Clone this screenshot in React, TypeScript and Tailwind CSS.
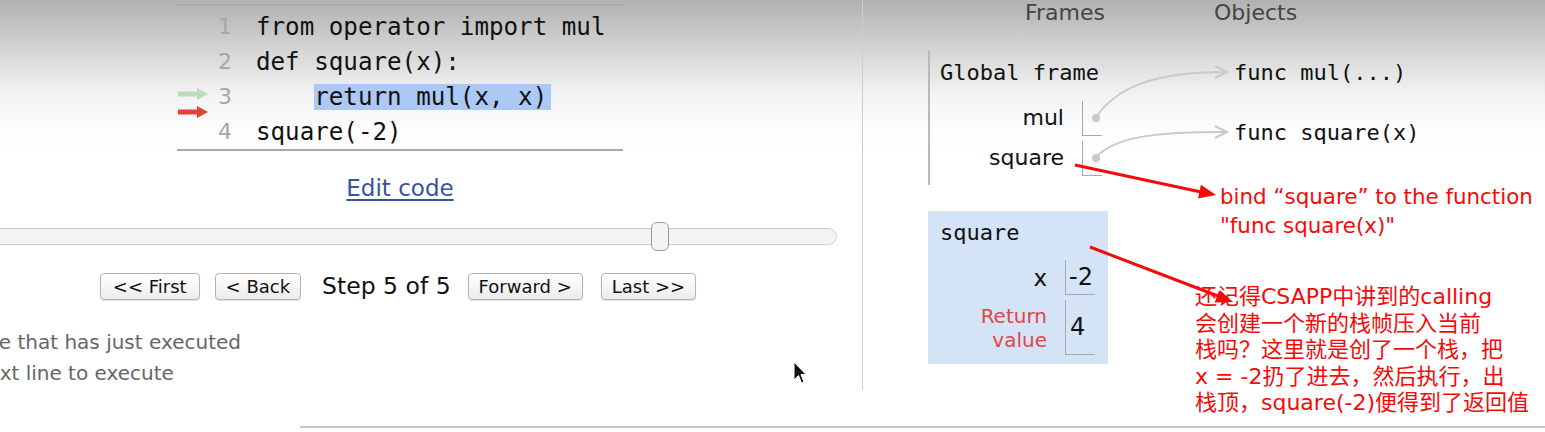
import React from 'react';

const mono = "font-['DejaVu_Sans_Mono',monospace]";

function GutterArrow({color}: {color: string}) {
  return (
    <svg width="30" height="12" viewBox="0 0 30 12">
      <polygon points="0,3.5 19,3.5 19,0 30,6 19,12 19,8.5 0,8.5" fill={color} />
    </svg>
  );
}

const codeLines = [
  {n: 1, text: 'from operator import mul'},
  {n: 2, text: 'def square(x):'},
  {n: 3, text: 'return mul(x, x)', indent: '    ', hl: true},
  {n: 4, text: 'square(-2)'},
];

function CodePane() {
  return (
    <div className="mx-auto mt-[4px] w-[446px] border-t-2 border-b-2 border-[#a9a9a9] pt-[3px]">
      {codeLines.map((l) => (
        <div key={l.n} className="flex h-[35px] items-center">
          <div className="relative h-full w-[32px]">
            {l.n === 3 && (
              <>
                <div className="absolute left-[1px] top-[9px] flex">
                  <GutterArrow color="#bddcbd" />
                </div>
                <div className="absolute left-[1px] top-[27px] flex">
                  <GutterArrow color="#e6403a" />
                </div>
              </>
            )}
          </div>
          <div className="w-[23px] text-right text-[22px] leading-[26px] text-[#a6a6a6]">{l.n}</div>
          <div className={`pl-[24px] text-[24.2px] leading-[26px] whitespace-pre text-[#111] ${mono}`}>
            {l.indent}
            {l.hl ? <span className="inline-block h-[26px] bg-[#abc9f4] pr-[4px]">{l.text}</span> : l.text}
          </div>
        </div>
      ))}
    </div>
  );
}

function NavButton({label}: {label: string}) {
  return (
    <button className="h-[27px] rounded-[4px] border border-[#b4b4b4] bg-[linear-gradient(to_bottom,#ffffff,#ececec)] px-[10px] text-[18px] leading-[24px] text-[#111] shadow-[0_1px_1px_rgba(0,0,0,0.12)]">
      {label}
    </button>
  );
}

function LeftPane() {
  return (
    <div className="w-[863px] shrink-0 border-r border-[#cdcdcd] pr-[25px]">
      <div className="-ml-[37px] w-[874px]">
        <CodePane />
        <div className="mt-[24px] text-center text-[23px] leading-[26px]">
          <a className="text-[#3a539d] underline underline-offset-[3px]">Edit code</a>
        </div>
        <div className="relative mt-[27px] h-[17px] rounded-full border border-[#cfcfcf] bg-[#f3f3f3]">
          <div className="absolute left-[687px] top-[-7px] h-[29px] w-[18px] rounded-[6px] border border-[#9a9a9a] bg-[#f3f3f3]" />
        </div>
        <div className="mt-[28px] flex items-center justify-center pr-[4px]">
          <div className="[&>button]:px-[12px]">
            <NavButton label="<< First" />
          </div>
          <div className="ml-[15px]">
            <NavButton label="< Back" />
          </div>
          <span className="ml-[21px] mr-[17px] text-[23.5px] leading-[27px] text-[#111]">Step 5 of 5</span>
          <NavButton label="Forward >" />
          <div className="ml-[18px]">
            <NavButton label="Last >>" />
          </div>
        </div>
        <div className="-ml-[26px] mt-[27px] text-[20px] leading-[31px] text-[#666]">
          <div className="flex items-center">
            <span className="mr-[8px] flex"><GutterArrow color="#bddcbd" /></span>
            line that has just executed
          </div>
          <div className="flex items-center">
            <span className="mr-[8px] flex"><GutterArrow color="#e6403a" /></span>
            next line to execute
          </div>
        </div>
      </div>
    </div>
  );
}

function PointerCell() {
  return (
    <div className="ml-[18px] flex h-[35px] w-[20px] items-center border-l border-b border-[#a8a8a8]">
      <div className="ml-[9px] h-[8px] w-[8px] rounded-full bg-[#c9c9c9]" />
    </div>
  );
}

function RightPane() {
  return (
    <div className="relative flex-1">
      <div className="flex pl-[162px] pt-[1px] text-[22px] leading-[24px] text-[#444]">
        <span className="w-[189px]">Frames</span>
        <span>Objects</span>
      </div>

      <div className="-mt-[1px] flex">
        <div className="ml-[65px] w-[180px]">
          <div className="mt-[26px] h-[135px] border-l-2 border-[#b9b9b9] pl-[10px] pt-[10px]">
            <div className={`text-[22px] leading-[26px] text-[#111] ${mono}`}>Global frame</div>
            <div className="mt-[12px] flex h-[40px] items-center">
              <span className="w-[124px] text-right text-[22px] leading-[26px] text-[#111]">mul</span>
              <PointerCell />
            </div>
            <div className="flex h-[40px] items-center">
              <span className="w-[124px] text-right text-[22px] leading-[26px] text-[#111]">square</span>
              <PointerCell />
            </div>
          </div>

          <div className="mt-[26px] h-[153px] bg-[#d5e3f7] pl-[12px] pt-[9px]">
            <div className={`text-[22px] leading-[26px] text-[#111] ${mono}`}>square</div>
            <div className="mt-[14px] flex h-[35px] items-center">
              <span className="w-[107px] text-right text-[23px] leading-[26px] text-[#111]">x</span>
              <div className="ml-[18px] flex h-[35px] w-[30px] items-center border-l border-b border-[#a8a8a8] pl-[3px] text-[24px] leading-[26px] text-[#111]">
                -2
              </div>
            </div>
            <div className="mt-[5px] flex h-[55px] items-center">
              <span className="w-[107px] text-right text-[20px] leading-[24px] text-[#e04646]">
                Return
                <br />
                value
              </span>
              <div className="ml-[18px] flex h-[55px] w-[30px] items-center border-l border-b border-[#a8a8a8] pl-[4px] text-[24px] leading-[26px] text-[#111]">
                4
              </div>
            </div>
          </div>
        </div>

        <div className={`ml-[126px] text-[22px] leading-[26px] text-[#111] ${mono}`}>
          <div className="mt-[36px]">func mul(...)</div>
          <div className="mt-[34px]">func square(x)</div>
        </div>
      </div>

      <svg className="pointer-events-none absolute left-0 top-0" width="682" height="432">
        <path d="M233 117 C 252 90, 285 72, 362 72" fill="none" stroke="#cacaca" strokeWidth="2" />
        <polyline points="352,66 364,72 352,78" fill="none" stroke="#cacaca" strokeWidth="2" />
        <path d="M233 157 C 252 138, 285 132, 362 132" fill="none" stroke="#cacaca" strokeWidth="2" />
        <polyline points="352,126 364,132 352,138" fill="none" stroke="#cacaca" strokeWidth="2" />
        <line x1="212" y1="165" x2="338" y2="192" stroke="#f50a0a" strokeWidth="3" />
        <polygon points="353,195 335.1,198.5 337.9,184.7" fill="#f50a0a" />
        <line x1="227" y1="247" x2="355" y2="296" stroke="#f50a0a" strokeWidth="3" />
        <polygon points="370,302 351.6,302.6 356.6,290.0" fill="#f50a0a" />
      </svg>

      <div className="absolute left-[357px] top-[182px] font-['DejaVu_Sans','Noto_Sans_CJK_SC',sans-serif] text-[21.4px] leading-[29px] whitespace-nowrap text-[#f50a0a]">
        <div>bind “square” to the function</div>
        <div>"func square(x)"</div>
      </div>
      <div className="absolute left-[332px] top-[284px] font-['DejaVu_Sans','Noto_Sans_CJK_SC',sans-serif] text-[22px] leading-[26.5px] whitespace-nowrap text-[#f50a0a]">
        <div>还记得CSAPP中讲到的calling</div>
        <div>会创建一个新的栈帧压入当前</div>
        <div>栈吗？这里就是创了一个栈，把</div>
        <div>x = -2扔了进去，然后执行，出</div>
        <div>栈顶，square(-2)便得到了返回值</div>
      </div>
    </div>
  );
}

export default function App() {
  return (
    <div className="relative h-[432px] w-[1545px] overflow-hidden bg-[linear-gradient(to_bottom,#b1b1b1_0px,#d8d8d8_55px,#f3f3f3_95px,#fdfdfd_130px,#ffffff_160px)] font-['DejaVu_Sans',sans-serif]">
      <div className="flex h-[390px]">
        <LeftPane />
        <RightPane />
      </div>
      <div className="ml-[300px] mt-[36px] border-t-2 border-[#c6c6c6]" />
      <svg className="absolute left-[793px] top-[361px]" width="14" height="24" viewBox="0 0 14 24">
        <path d="M1 1 L1 19 L5.5 14.5 L8.5 22 L11 21 L8 13.5 L13 13.5 Z" fill="#111" stroke="#fff" strokeWidth="1" />
      </svg>
    </div>
  );
}
